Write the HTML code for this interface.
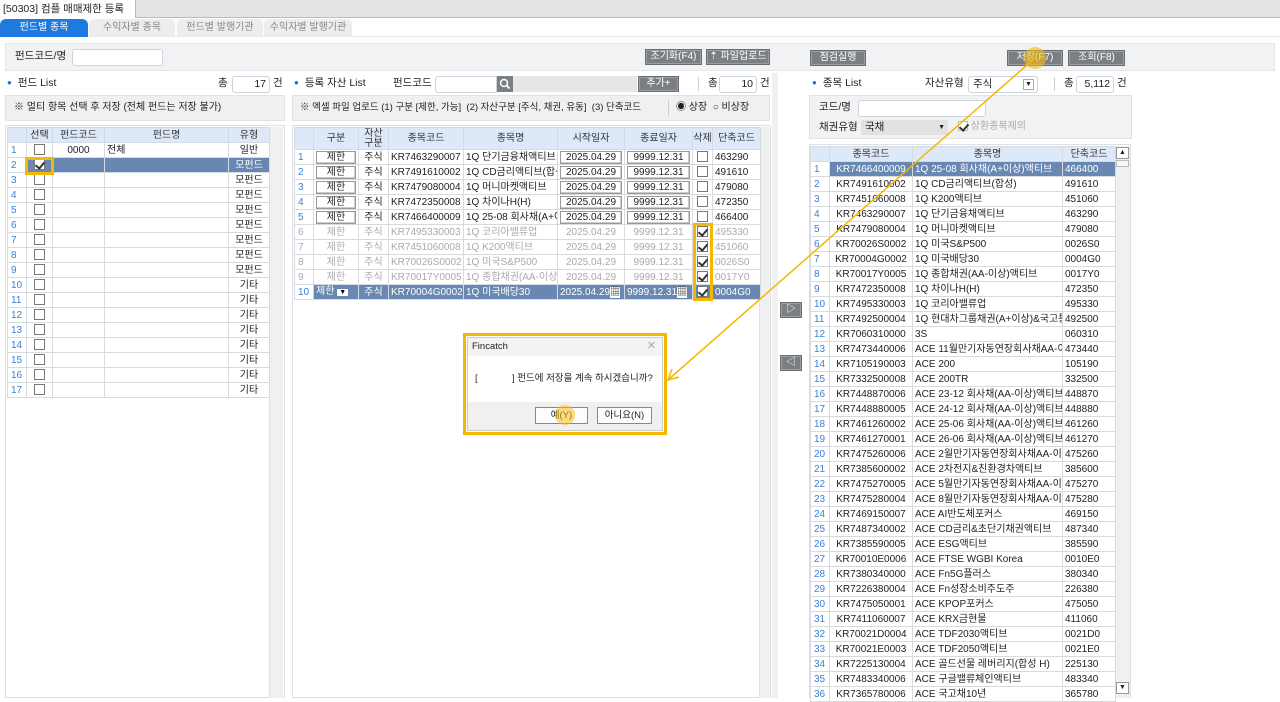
<!DOCTYPE html>
<html><head><meta charset="utf-8">
<style>
*{box-sizing:border-box;margin:0;padding:0}
body{width:1280px;height:698px;overflow:hidden;background:#fff;font-family:"Liberation Sans","Noto Sans CJK KR",sans-serif;font-size:10.5px;line-height:1.2;color:#222;position:relative}
.a{position:absolute}
.btn{position:absolute;background:#7b7f84;color:#fff;border:1px solid #6a6e73;text-align:center;font-size:10px;line-height:14px;height:16px;box-shadow:inset 0 0 0 1px #9a9ea3;white-space:nowrap;overflow:hidden}
.inp{position:absolute;background:#fff;border:1px solid #cfd4da;border-radius:3px;height:17px}
.dot{color:#1f6fd6;font-size:8px;margin-right:6px;vertical-align:middle}
.note{position:absolute;background:#eef0f2;border:1px solid #e0e3e6;line-height:24px;padding-left:8px;font-size:10px}
table{border-collapse:collapse;table-layout:fixed;position:absolute;background:#fff;font-size:10px}
td,th{border:1px solid #d6dbe1;height:15px;line-height:13px;white-space:nowrap;overflow:hidden;padding:0 2px;font-weight:normal}
th{background:#dde9f8;color:#333;text-align:center}
td.n{color:#3b7fd6;text-align:left;padding-left:3px}
.c{text-align:center}
.cb{display:inline-block;width:11px;height:11px;border:1px solid #777;background:#fff;vertical-align:middle;position:relative}
.cb.k::after{content:"";position:absolute;left:2px;top:0px;width:4px;height:7px;border:solid #333;border-width:0 2px 2px 0;transform:rotate(40deg)}
tr.sel td{background:#6888b3;color:#fff}
tr.g td{color:#aaa}
.bx{display:block;border:1px solid #999;background:#fff;height:13px;line-height:11px;text-align:center;box-shadow:inset -1px -1px 0 #ccc}
.scroll{position:absolute;background:#f0f0f0;border-left:1px solid #e2e2e2}
</style></head><body>
<div class="a" style="left:0;top:0;width:1280px;height:18px;background:#e4e4e4;border-bottom:1px solid #bbb"></div>
<div class="a" style="left:0;top:0;width:136px;height:18px;background:#fff;border-right:1px solid #bbb;line-height:18px;padding-left:3px;font-size:10.5px">[50303] 컴플 매매제한 등록 &nbsp;<span style="font-size:10px">✕</span></div>
<div class="a" style="left:0;top:19px;width:1280px;height:18px;background:#fff;border-bottom:1px solid #e8e8e8"></div>
<div class="a" style="left:0;top:19px;width:88px;height:18px;background:#1f7ae0;color:#fff;border-radius:6px 6px 0 0;text-align:center;line-height:18px;font-size:10px">펀드별 종목</div>
<div class="a" style="left:89px;top:19px;width:86px;height:18px;background:#ededed;color:#888;border-radius:5px 5px 0 0;text-align:center;line-height:18px;font-size:10px">수익자별 종목</div>
<div class="a" style="left:177px;top:19px;width:86px;height:18px;background:#ededed;color:#888;border-radius:5px 5px 0 0;text-align:center;line-height:18px;font-size:10px">펀드별 발행기관</div>
<div class="a" style="left:264px;top:19px;width:88px;height:18px;background:#ededed;color:#888;border-radius:5px 5px 0 0;text-align:center;line-height:18px;font-size:10px">수익자별 발행기관</div>
<div class="a" style="left:5px;top:43px;width:1270px;height:28px;background:#f0f2f4;border:1px solid #e3e6e9"></div>
<div class="a" style="left:15px;top:50px">펀드코드/명</div>
<div class="inp" style="left:72px;top:49px;width:91px"></div>
<div class="btn" style="left:645px;top:49px;width:57px">조기화(F4)</div>
<div class="btn" style="left:706px;top:49px;width:64px">⇡ 파일업로드</div>
<div class="btn" style="left:810px;top:50px;width:56px">점검실행</div>
<div class="btn" style="left:1007px;top:50px;width:56px">저장(F7)</div>
<div class="btn" style="left:1068px;top:50px;width:57px">조회(F8)</div>

<div class="a" style="left:7px;top:77px"><span class="dot">●</span>펀드 List</div>
<div class="a" style="left:218px;top:77px">총</div>
<div class="inp" style="left:232px;top:76px;width:38px;text-align:right;padding-right:3px;line-height:15px">17</div>
<div class="a" style="left:273px;top:77px">건</div>
<div class="note" style="left:5px;top:95px;width:280px;height:26px">※ 멀티 항목 선택 후 저장 (전체 펀드는 저장 불가)</div>
<div class="a" style="left:5px;top:125px;width:280px;height:573px;border:1px solid #dcdfe3;background:#fff"></div>
<div class="scroll" style="left:269px;top:127px;width:14px;height:571px"></div>
<table style="left:7px;top:127px;width:262px">
<colgroup><col style="width:19px"><col style="width:26px"><col style="width:52px"><col style="width:124px"><col style="width:41px"></colgroup>
<tr><th></th><th>선택</th><th>펀드코드</th><th>펀드명</th><th>유형</th></tr>
<tr><td class="n">1</td><td class="c"><i class="cb"></i></td><td class="c">0000</td><td>전체</td><td class="c">일반</td></tr>
<tr class="sel"><td class="n" style="background:#fff;color:#3b7fd6">2</td><td class="c"><i class="cb k"></i></td><td></td><td></td><td class="c">모펀드</td></tr>
<tr><td class="n">3</td><td class="c"><i class="cb"></i></td><td></td><td></td><td class="c">모펀드</td></tr>
<tr><td class="n">4</td><td class="c"><i class="cb"></i></td><td></td><td></td><td class="c">모펀드</td></tr>
<tr><td class="n">5</td><td class="c"><i class="cb"></i></td><td></td><td></td><td class="c">모펀드</td></tr>
<tr><td class="n">6</td><td class="c"><i class="cb"></i></td><td></td><td></td><td class="c">모펀드</td></tr>
<tr><td class="n">7</td><td class="c"><i class="cb"></i></td><td></td><td></td><td class="c">모펀드</td></tr>
<tr><td class="n">8</td><td class="c"><i class="cb"></i></td><td></td><td></td><td class="c">모펀드</td></tr>
<tr><td class="n">9</td><td class="c"><i class="cb"></i></td><td></td><td></td><td class="c">모펀드</td></tr>
<tr><td class="n">10</td><td class="c"><i class="cb"></i></td><td></td><td></td><td class="c">기타</td></tr>
<tr><td class="n">11</td><td class="c"><i class="cb"></i></td><td></td><td></td><td class="c">기타</td></tr>
<tr><td class="n">12</td><td class="c"><i class="cb"></i></td><td></td><td></td><td class="c">기타</td></tr>
<tr><td class="n">13</td><td class="c"><i class="cb"></i></td><td></td><td></td><td class="c">기타</td></tr>
<tr><td class="n">14</td><td class="c"><i class="cb"></i></td><td></td><td></td><td class="c">기타</td></tr>
<tr><td class="n">15</td><td class="c"><i class="cb"></i></td><td></td><td></td><td class="c">기타</td></tr>
<tr><td class="n">16</td><td class="c"><i class="cb"></i></td><td></td><td></td><td class="c">기타</td></tr>
<tr><td class="n">17</td><td class="c"><i class="cb"></i></td><td></td><td></td><td class="c">기타</td></tr>
</table>
<div class="a" style="left:25px;top:157px;width:29px;height:18px;border:3px solid #f5b800"></div>

<div class="a" style="left:294px;top:77px"><span class="dot">●</span>등록 자산 List</div>
<div class="a" style="left:393px;top:77px">펀드코드</div>
<div class="inp" style="left:435px;top:76px;width:62px;border-radius:3px 0 0 3px"></div>
<div class="a" style="left:497px;top:76px;width:16px;height:16px;background:#7b7f84"><svg width="16" height="16"><circle cx="7" cy="7" r="3.5" fill="none" stroke="#fff" stroke-width="1.5"/><line x1="9.5" y1="9.5" x2="12.5" y2="12.5" stroke="#fff" stroke-width="1.8"/></svg></div>
<div class="a" style="left:513px;top:76px;width:124px;height:16px;background:#e4e6e8"></div>
<div class="btn" style="left:638px;top:76px;width:41px">추가+</div>
<div class="a" style="left:698px;top:77px;width:1px;height:14px;background:#ccc"></div>
<div class="a" style="left:708px;top:77px">총</div>
<div class="inp" style="left:719px;top:76px;width:38px;text-align:right;padding-right:3px;line-height:15px">10</div>
<div class="a" style="left:760px;top:77px">건</div>
<div class="note" style="left:292px;top:95px;width:478px;height:26px;font-size:9.5px;padding-left:7px">※ 엑셀 파일 업로드 (1) 구분 [제한, 가능] &nbsp;(2) 자산구분 [주식, 채권, 유동] &nbsp;(3) 단축코드</div>
<div class="a" style="left:668px;top:100px;width:1px;height:16px;background:#ccc"></div>
<div class="a" style="left:676px;top:102px;font-size:10px">◉ 상장 &nbsp;○ 비상장</div>
<div class="a" style="left:292px;top:125px;width:479px;height:573px;border:1px solid #dcdfe3;background:#fff"></div>
<div class="scroll" style="left:759px;top:127px;width:11px;height:571px"></div>
<table style="left:294px;top:127px;width:466px">
<colgroup><col style="width:19px"><col style="width:45px"><col style="width:30px"><col style="width:75px"><col style="width:94px"><col style="width:67px"><col style="width:68px"><col style="width:20px"><col style="width:48px"></colgroup>
<tr><th style="height:22px"></th><th>구분</th><th style="line-height:10px">자산<br>구분</th><th>종목코드</th><th>종목명</th><th>시작일자</th><th>종료일자</th><th style="padding:0">삭제</th><th>단축코드</th></tr>
<tr><td class="n">1</td><td><span class="bx">제한</span></td><td class="c">주식</td><td>KR7463290007</td><td>1Q 단기금융채액티브</td><td><span class="bx">2025.04.29</span></td><td><span class="bx">9999.12.31</span></td><td class="c" style="padding:0"><i class="cb"></i></td><td>463290</td></tr>
<tr><td class="n">2</td><td><span class="bx">제한</span></td><td class="c">주식</td><td>KR7491610002</td><td>1Q CD금리액티브(합성</td><td><span class="bx">2025.04.29</span></td><td><span class="bx">9999.12.31</span></td><td class="c" style="padding:0"><i class="cb"></i></td><td>491610</td></tr>
<tr><td class="n">3</td><td><span class="bx">제한</span></td><td class="c">주식</td><td>KR7479080004</td><td>1Q 머니마켓액티브</td><td><span class="bx">2025.04.29</span></td><td><span class="bx">9999.12.31</span></td><td class="c" style="padding:0"><i class="cb"></i></td><td>479080</td></tr>
<tr><td class="n">4</td><td><span class="bx">제한</span></td><td class="c">주식</td><td>KR7472350008</td><td>1Q 차이나H(H)</td><td><span class="bx">2025.04.29</span></td><td><span class="bx">9999.12.31</span></td><td class="c" style="padding:0"><i class="cb"></i></td><td>472350</td></tr>
<tr><td class="n">5</td><td><span class="bx">제한</span></td><td class="c">주식</td><td>KR7466400009</td><td>1Q 25-08 회사채(A+이</td><td><span class="bx">2025.04.29</span></td><td><span class="bx">9999.12.31</span></td><td class="c" style="padding:0"><i class="cb"></i></td><td>466400</td></tr>
<tr class="g"><td class="n">6</td><td class="c">제한</td><td class="c">주식</td><td>KR7495330003</td><td>1Q 코리아밸류업</td><td class="c">2025.04.29</td><td class="c">9999.12.31</td><td class="c" style="padding:0"><i class="cb k"></i></td><td>495330</td></tr>
<tr class="g"><td class="n">7</td><td class="c">제한</td><td class="c">주식</td><td>KR7451060008</td><td>1Q K200액티브</td><td class="c">2025.04.29</td><td class="c">9999.12.31</td><td class="c" style="padding:0"><i class="cb k"></i></td><td>451060</td></tr>
<tr class="g"><td class="n">8</td><td class="c">제한</td><td class="c">주식</td><td>KR70026S0002</td><td>1Q 미국S&amp;P500</td><td class="c">2025.04.29</td><td class="c">9999.12.31</td><td class="c" style="padding:0"><i class="cb k"></i></td><td>0026S0</td></tr>
<tr class="g"><td class="n">9</td><td class="c">제한</td><td class="c">주식</td><td>KR70017Y0005</td><td>1Q 종합채권(AA-이상)</td><td class="c">2025.04.29</td><td class="c">9999.12.31</td><td class="c" style="padding:0"><i class="cb k"></i></td><td>0017Y0</td></tr>
<tr class="sel"><td class="n" style="background:#fff;color:#3b7fd6">10</td><td>제한 <span style="background:#fff;color:#000;font-size:7px;padding:0 2px">▼</span></td><td class="c">주식</td><td>KR70004G0002</td><td>1Q 미국배당30</td><td>2025.04.29<span style="background:#fff;color:#333">▦</span></td><td>9999.12.31<span style="background:#fff;color:#333">▦</span></td><td class="c" style="padding:0"><i class="cb k"></i></td><td>0004G0</td></tr>
</table>
<div class="a" style="left:693px;top:223px;width:20px;height:78px;border:3px solid #f5b800"></div>
<div class="a" style="left:772px;top:73px;width:6px;height:625px;background:#f1f1f1"></div>
<div class="btn" style="left:780px;top:302px;width:22px;height:16px">▷</div>
<div class="btn" style="left:780px;top:355px;width:22px;height:16px">◁</div>

<div class="a" style="left:812px;top:77px"><span class="dot">●</span>종목 List</div>
<div class="a" style="left:925px;top:77px">자산유형</div>
<div class="inp" style="left:968px;top:76px;width:70px;line-height:15px;padding-left:4px">주식<span style="position:absolute;right:3px;top:2px;width:11px;height:11px;border:1px solid #aaa;font-size:7px;line-height:10px;text-align:center">▼</span></div>
<div class="a" style="left:1054px;top:77px;width:1px;height:14px;background:#ccc"></div>
<div class="a" style="left:1064px;top:77px">총</div>
<div class="inp" style="left:1076px;top:76px;width:38px;text-align:right;padding-right:3px;line-height:15px">5,112</div>
<div class="a" style="left:1117px;top:77px">건</div>
<div class="a" style="left:809px;top:95px;width:323px;height:44px;background:#f0f2f4;border:1px solid #e0e3e6"></div>
<div class="a" style="left:819px;top:101px">코드/명</div>
<div class="inp" style="left:858px;top:100px;width:128px"></div>
<div class="a" style="left:819px;top:121px">채권유형</div>
<div class="a" style="left:861px;top:120px;width:87px;height:15px;background:#e2e2e2;padding-left:4px;line-height:15px">국채<span style="position:absolute;right:3px;font-size:7px">▼</span></div>
<div class="a" style="left:958px;top:121px;color:#aaa;font-size:10px"><span class="cb k" style="border-color:#bbb;width:10px;height:10px"></span> 상환종목제외</div>
<div class="a" style="left:809px;top:144px;width:322px;height:554px;border:1px solid #dcdfe3;background:#fff"></div>
<div class="scroll" style="left:1115px;top:146px;width:15px;height:552px"></div>
<div class="a" style="left:1116px;top:147px;width:13px;height:12px;border:1px solid #999;background:#fff;font-size:7px;text-align:center;line-height:10px">▲</div>
<div class="a" style="left:1116px;top:160px;width:13px;height:7px;border:1px solid #bbb;background:#f8f8f8"></div>
<div class="a" style="left:1116px;top:682px;width:13px;height:12px;border:1px solid #999;background:#fff;font-size:7px;text-align:center;line-height:10px">▼</div>
<table style="left:810px;top:146px;width:305px">
<colgroup><col style="width:19px"><col style="width:83px"><col style="width:150px"><col style="width:53px"></colgroup>
<tr><th></th><th>종목코드</th><th>종목명</th><th>단축코드</th></tr>
<tr class="sel"><td class="n" style="background:#fff;color:#3b7fd6">1</td><td class="c">KR7466400009</td><td>1Q 25-08 회사채(A+이상)액티브</td><td>466400</td></tr>
<tr><td class="n">2</td><td class="c">KR7491610002</td><td>1Q CD금리액티브(합성)</td><td>491610</td></tr>
<tr><td class="n">3</td><td class="c">KR7451060008</td><td>1Q K200액티브</td><td>451060</td></tr>
<tr><td class="n">4</td><td class="c">KR7463290007</td><td>1Q 단기금융채액티브</td><td>463290</td></tr>
<tr><td class="n">5</td><td class="c">KR7479080004</td><td>1Q 머니마켓액티브</td><td>479080</td></tr>
<tr><td class="n">6</td><td class="c">KR70026S0002</td><td>1Q 미국S&amp;P500</td><td>0026S0</td></tr>
<tr><td class="n">7</td><td class="c">KR70004G0002</td><td>1Q 미국배당30</td><td>0004G0</td></tr>
<tr><td class="n">8</td><td class="c">KR70017Y0005</td><td>1Q 종합채권(AA-이상)액티브</td><td>0017Y0</td></tr>
<tr><td class="n">9</td><td class="c">KR7472350008</td><td>1Q 차이나H(H)</td><td>472350</td></tr>
<tr><td class="n">10</td><td class="c">KR7495330003</td><td>1Q 코리아밸류업</td><td>495330</td></tr>
<tr><td class="n">11</td><td class="c">KR7492500004</td><td>1Q 현대차그룹채권(A+이상)&amp;국고통</td><td>492500</td></tr>
<tr><td class="n">12</td><td class="c">KR7060310000</td><td>3S</td><td>060310</td></tr>
<tr><td class="n">13</td><td class="c">KR7473440006</td><td>ACE 11월만기자동연장회사채AA-이상</td><td>473440</td></tr>
<tr><td class="n">14</td><td class="c">KR7105190003</td><td>ACE 200</td><td>105190</td></tr>
<tr><td class="n">15</td><td class="c">KR7332500008</td><td>ACE 200TR</td><td>332500</td></tr>
<tr><td class="n">16</td><td class="c">KR7448870006</td><td>ACE 23-12 회사채(AA-이상)액티브</td><td>448870</td></tr>
<tr><td class="n">17</td><td class="c">KR7448880005</td><td>ACE 24-12 회사채(AA-이상)액티브</td><td>448880</td></tr>
<tr><td class="n">18</td><td class="c">KR7461260002</td><td>ACE 25-06 회사채(AA-이상)액티브</td><td>461260</td></tr>
<tr><td class="n">19</td><td class="c">KR7461270001</td><td>ACE 26-06 회사채(AA-이상)액티브</td><td>461270</td></tr>
<tr><td class="n">20</td><td class="c">KR7475260006</td><td>ACE 2월만기자동연장회사채AA-이상</td><td>475260</td></tr>
<tr><td class="n">21</td><td class="c">KR7385600002</td><td>ACE 2차전지&amp;친환경차액티브</td><td>385600</td></tr>
<tr><td class="n">22</td><td class="c">KR7475270005</td><td>ACE 5월만기자동연장회사채AA-이상</td><td>475270</td></tr>
<tr><td class="n">23</td><td class="c">KR7475280004</td><td>ACE 8월만기자동연장회사채AA-이상</td><td>475280</td></tr>
<tr><td class="n">24</td><td class="c">KR7469150007</td><td>ACE AI반도체포커스</td><td>469150</td></tr>
<tr><td class="n">25</td><td class="c">KR7487340002</td><td>ACE CD금리&amp;초단기채권액티브</td><td>487340</td></tr>
<tr><td class="n">26</td><td class="c">KR7385590005</td><td>ACE ESG액티브</td><td>385590</td></tr>
<tr><td class="n">27</td><td class="c">KR70010E0006</td><td>ACE FTSE WGBI Korea</td><td>0010E0</td></tr>
<tr><td class="n">28</td><td class="c">KR7380340000</td><td>ACE Fn5G플러스</td><td>380340</td></tr>
<tr><td class="n">29</td><td class="c">KR7226380004</td><td>ACE Fn성장소비주도주</td><td>226380</td></tr>
<tr><td class="n">30</td><td class="c">KR7475050001</td><td>ACE KPOP포커스</td><td>475050</td></tr>
<tr><td class="n">31</td><td class="c">KR7411060007</td><td>ACE KRX금현물</td><td>411060</td></tr>
<tr><td class="n">32</td><td class="c">KR70021D0004</td><td>ACE TDF2030액티브</td><td>0021D0</td></tr>
<tr><td class="n">33</td><td class="c">KR70021E0003</td><td>ACE TDF2050액티브</td><td>0021E0</td></tr>
<tr><td class="n">34</td><td class="c">KR7225130004</td><td>ACE 골드선물 레버리지(합성 H)</td><td>225130</td></tr>
<tr><td class="n">35</td><td class="c">KR7483340006</td><td>ACE 구글밸류체인액티브</td><td>483340</td></tr>
<tr><td class="n">36</td><td class="c">KR7365780006</td><td>ACE 국고채10년</td><td>365780</td></tr>
</table>

<div class="a" style="left:463px;top:333px;width:204px;height:102px;border:3px solid #f5b800;background:#fff"></div>
<div class="a" style="left:467px;top:337px;width:196px;height:94px;background:#fff;border:1px solid #ccc"></div>
<div class="a" style="left:468px;top:338px;width:194px;height:18px;background:#f3f3f3;line-height:17px;padding-left:4px;font-size:9.5px">Fincatch<span style="position:absolute;right:6px;color:#aaa;font-size:11px">✕</span></div>
<div class="a" style="left:475px;top:373px;font-size:9.5px">[ &nbsp; &nbsp; &nbsp; &nbsp; &nbsp; &nbsp; ] 펀드에 저장을 계속 하시겠습니까?</div>
<div class="a" style="left:468px;top:402px;width:194px;height:28px;background:#f0f0f0"></div>
<div class="a" style="left:535px;top:407px;width:53px;height:17px;border:1px solid #888;background:#fdfdfd;text-align:center;line-height:15px;font-size:9.5px">예(Y)</div>
<div class="a" style="left:597px;top:407px;width:55px;height:17px;border:1px solid #888;background:#fdfdfd;text-align:center;line-height:15px;font-size:9.5px">아니요(N)</div>
<div class="a" style="left:555px;top:405px;width:20px;height:20px;border-radius:50%;background:rgba(245,190,20,0.55)"></div>
<div class="a" style="left:1024px;top:47px;width:22px;height:22px;border-radius:50%;background:rgba(245,190,20,0.6)"></div>
<svg class="a" style="left:0;top:0" width="1280" height="698"><line x1="1035" y1="58" x2="669" y2="379" stroke="#f5b800" stroke-width="1.5"/><polyline points="672,369 668,380 679,377" fill="none" stroke="#f5b800" stroke-width="1.5"/></svg>
</body></html>
